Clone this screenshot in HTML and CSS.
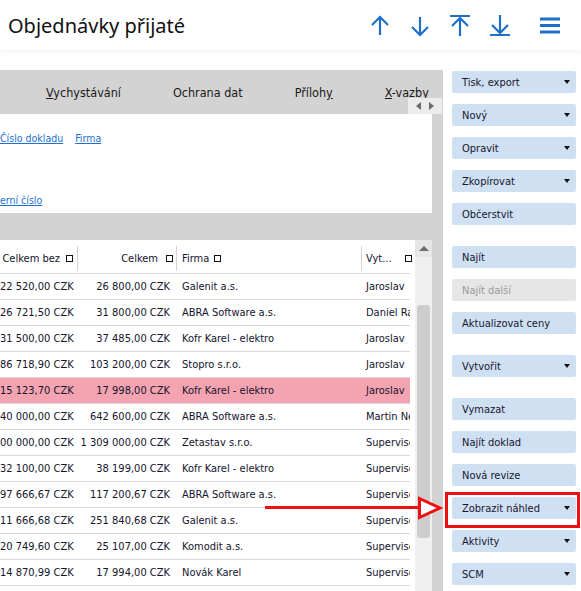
FILE: index.html
```html
<!DOCTYPE html>
<html lang="cs">
<head>
    <meta charset="UTF-8">
    <meta name="viewport" content="width=device-width, initial-scale=1.0">
    <title>Objednávky přijaté</title>
    <link rel="stylesheet" href="styles.css">
</head>
<body>
    <div class="app">
        <header class="topbar">
            <h1 class="title">Objednávky přijaté</h1>
            <nav class="nav-icons">
                <svg class="nav-icon" width="24" height="24" viewBox="0 0 24 24"><path d="M12 4v18M4 12l8-8 8 8"/></svg>
                <svg class="nav-icon" width="24" height="24" viewBox="0 0 24 24"><path d="M12 4v18M4 14l8 8 8-8"/></svg>
                <svg class="nav-icon" width="24" height="24" viewBox="0 0 24 24"><path d="M2 3h20M12 5v18M4 13l8-8 8 8"/></svg>
                <svg class="nav-icon" width="24" height="24" viewBox="0 0 24 24"><path d="M2 22h20M12 2v18M4 12l8 8 8-8"/></svg>
                <svg class="nav-icon menu" width="24" height="24" viewBox="0 0 24 24"><path d="M2 6h20M2 12.5h20M2 19h20"/></svg>
            </nav>
        </header>

        <div class="main">
            <section class="doc-pane">
                <div class="tabs">
                    <span class="tab"><u>V</u>ychystávání</span>
                    <span class="tab">Ochrana dat</span>
                    <span class="tab">Příloh<u>y</u></span>
                    <span class="tab"><u>X</u>-vazby</span>
                    <div class="tab-scroll"><span class="tri-left"></span><span class="tri-right"></span></div>
                </div>

                <div class="pane-body">
                    <div class="filter-panel">
                        <div class="link-row">
                            <a href="#">Číslo dokladu</a>
                            <a href="#">Firma</a>
                        </div>
                        <div class="link-row">
                            <a href="#">erní číslo</a>
                        </div>
                    </div>

                    <div class="grid-wrap">
                        <div class="grid">
                            <div class="grid-head">
                                <div class="hcell right">Celkem bez <span class="chk"></span></div>
                                <div class="hcell right wide-gap">Celkem <span class="chk"></span></div>
                                <div class="hcell left">Firma <span class="chk"></span></div>
                                <div class="hcell split">Vyt... <span class="chk"></span></div>
                            </div>
                            <div class="row"><span class="num">22 520,00 CZK</span><span class="num total">26 800,00 CZK</span><span class="txt">Galenit a.s.</span><span class="who">Jaroslav</span></div>
                            <div class="row"><span class="num">26 721,50 CZK</span><span class="num total">31 800,00 CZK</span><span class="txt">ABRA Software a.s.</span><span class="who">Daniel Ra</span></div>
                            <div class="row"><span class="num">31 500,00 CZK</span><span class="num total">37 485,00 CZK</span><span class="txt">Kofr Karel - elektro</span><span class="who">Jaroslav</span></div>
                            <div class="row"><span class="num">86 718,90 CZK</span><span class="num total">103 200,00 CZK</span><span class="txt">Stopro s.r.o.</span><span class="who">Jaroslav</span></div>
                            <div class="row marked"><span class="num">15 123,70 CZK</span><span class="num total">17 998,00 CZK</span><span class="txt">Kofr Karel - elektro</span><span class="who">Jaroslav</span></div>
                            <div class="row"><span class="num">40 000,00 CZK</span><span class="num total">642 600,00 CZK</span><span class="txt">ABRA Software a.s.</span><span class="who">Martin Ne</span></div>
                            <div class="row"><span class="num">00 000,00 CZK</span><span class="num total">1 309 000,00 CZK</span><span class="txt">Zetastav s.r.o.</span><span class="who">Supervisor</span></div>
                            <div class="row"><span class="num">32 100,00 CZK</span><span class="num total">38 199,00 CZK</span><span class="txt">Kofr Karel - elektro</span><span class="who">Supervisor</span></div>
                            <div class="row"><span class="num">97 666,67 CZK</span><span class="num total">117 200,67 CZK</span><span class="txt">ABRA Software a.s.</span><span class="who">Supervisor</span></div>
                            <div class="row"><span class="num">11 666,68 CZK</span><span class="num total">251 840,68 CZK</span><span class="txt">Galenit a.s.</span><span class="who">Supervisor</span></div>
                            <div class="row"><span class="num">20 749,60 CZK</span><span class="num total">25 107,00 CZK</span><span class="txt">Komodit a.s.</span><span class="who">Supervisor</span></div>
                            <div class="row"><span class="num">14 870,99 CZK</span><span class="num total">17 994,00 CZK</span><span class="txt">Novák Karel</span><span class="who">Supervisor</span></div>
                        </div>
                        <div class="vscroll">
                            <div class="vscroll-up"><span class="tri-up"></span></div>
                            <div class="vscroll-thumb"></div>
                        </div>
                    </div>
                </div>
            </section>

            <aside class="actions">
                <button class="btn drop">Tisk, export</button>
                <button class="btn drop">Nový</button>
                <button class="btn drop">Opravit</button>
                <button class="btn drop">Zkopírovat</button>
                <button class="btn">Občerstvit</button>
                <button class="btn group">Najít</button>
                <button class="btn disabled">Najít další</button>
                <button class="btn">Aktualizovat ceny</button>
                <button class="btn drop group">Vytvořit</button>
                <button class="btn group">Vymazat</button>
                <button class="btn">Najít doklad</button>
                <button class="btn">Nová revize</button>
                <button class="btn drop">Zobrazit náhled</button>
                <button class="btn drop">Aktivity</button>
                <button class="btn drop">SCM</button>
            </aside>
        </div>

        <!-- zvýraznění tlačítka náhledu -->
        <svg class="callout" width="581" height="591" viewBox="0 0 581 591">
            <line x1="265" y1="507.5" x2="419" y2="507.5"/>
            <polygon points="419.5,498.5 419.5,517.5 440,508"/>
            <rect x="446.5" y="493.5" width="132" height="33"/>
        </svg>
    </div>
</body>
</html>
```

FILE: styles.css
```css
body {
    margin: 0;
    padding: 0;
    background: #ffffff;
    font-family: "DejaVu Sans Condensed", "DejaVu Sans", sans-serif;
    font-size: 11px;
    color: #14142e;
}

.app {
    position: relative;
    width: 581px;
    height: 591px;
    overflow: hidden;
}

.topbar {
    height: 50px;
    display: flex;
    align-items: center;
    justify-content: space-between;
    background: #fff;
    box-shadow: 0 3px 5px rgba(0, 0, 0, 0.04);
    position: relative;
    z-index: 1;
}

.title {
    margin: 0 0 0 8px;
    font-family: "Noto Sans", sans-serif;
    font-size: 20px;
    font-weight: normal;
    color: #111;
}

.nav-icons {
    display: flex;
    align-items: center;
    gap: 16px;
    margin-right: 19px;
}

.nav-icon {
    fill: none;
    stroke: #1e6fc8;
    stroke-width: 2.2;
}

.nav-icon.menu {
    margin-left: 10px;
    stroke-width: 3;
}

.main {
    display: flex;
    height: 541px;
}

/* levá část s dokladem */
.doc-pane {
    width: 443px;
    margin-top: 20px;
    background: #d3d3d3;
    display: flex;
    flex-direction: column;
}

.tabs {
    position: relative;
    height: 44px;
    display: flex;
    align-items: center;
    gap: 52px;
    padding-left: 46px;
    font-size: 12.5px;
    color: #1a1a1a;
    flex-shrink: 0;
}

.tab {
    white-space: nowrap;
    padding-top: 1px;
}

.tab-scroll {
    position: absolute;
    right: 1px;
    bottom: 0;
    width: 34px;
    height: 16px;
    background: #ececec;
    display: flex;
    align-items: center;
    justify-content: center;
    gap: 8px;
}

.tri-left,
.tri-right {
    width: 0;
    height: 0;
    border-top: 4px solid transparent;
    border-bottom: 4px solid transparent;
}

.tri-left {
    border-right: 5px solid #6a6a6a;
}

.tri-right {
    border-left: 5px solid #6a6a6a;
}

.pane-body {
    width: 432px;
    flex: 1;
    display: flex;
    flex-direction: column;
    gap: 27px;
    min-height: 0;
}

.filter-panel {
    height: 99px;
    background: #fff;
    display: flex;
    flex-direction: column;
    gap: 48px;
    padding-top: 17px;
    box-sizing: border-box;
}

.link-row {
    display: flex;
    gap: 12px;
    font-size: 10.5px;
    line-height: 14px;
}

.link-row a {
    color: #1f6fd0;
}

.grid-wrap {
    flex: 1;
    display: flex;
    background: #fff;
    min-height: 0;
    overflow: hidden;
}

.grid {
    width: 415px;
}

.grid-head,
.row {
    display: grid;
    grid-template-columns: 78px 99px 185px 50px;
    width: 410px;
    border-bottom: 1px solid #d8d8d8;
}

.grid-head {
    height: 34px;
    align-items: center;
    padding-top: 3px;
    box-sizing: border-box;
}

.hcell {
    display: flex;
    align-items: center;
    height: 25px;
    white-space: nowrap;
    border-right: 1px solid #d4d4d4;
    box-sizing: border-box;
}

.hcell.right {
    justify-content: flex-end;
    gap: 6px;
    padding-right: 4px;
}

.hcell.wide-gap {
    gap: 8px;
    padding-right: 3px;
}

.hcell.left {
    gap: 5px;
    padding-left: 5px;
}

.hcell.split {
    justify-content: space-between;
    padding-left: 4px;
    border-right: none;
    width: 50px;
}

.chk {
    display: inline-block;
    width: 5px;
    height: 5px;
    border: 1px solid #111;
}

.row {
    height: 26px;
    box-sizing: border-box;
    align-items: center;
    white-space: nowrap;
}

.row.marked {
    background: #f4a4b1;
}

.num {
    text-align: right;
    padding-right: 6px;
}

.num.total {
    padding-right: 7px;
}

.txt {
    padding-left: 5px;
}

.who {
    padding-left: 4px;
    overflow: hidden;
    width: 48px;
    box-sizing: border-box;
}

.vscroll {
    width: 17px;
    background: #f0f0f0;
    display: flex;
    flex-direction: column;
    align-items: center;
}

.vscroll-up {
    width: 17px;
    height: 17px;
    background: #e6e6e6;
    display: flex;
    align-items: center;
    justify-content: center;
}

.tri-up {
    width: 0;
    height: 0;
    border-left: 5px solid transparent;
    border-right: 5px solid transparent;
    border-bottom: 5px solid #6a6a6a;
}

.vscroll-thumb {
    width: 13px;
    height: 233px;
    margin-top: 48px;
    background: #cdcdcd;
    border-radius: 3px;
}

/* pravý panel s akcemi */
.actions {
    width: 138px;
    padding: 21px 0 0 9px;
    box-sizing: border-box;
    display: flex;
    flex-direction: column;
    gap: 11px;
}

.btn {
    position: relative;
    width: 124px;
    height: 22px;
    flex-shrink: 0;
    border: none;
    border-radius: 2px;
    background: #cfe0f3;
    padding: 0 0 0 10px;
    text-align: left;
    font-family: inherit;
    font-size: 11px;
    color: #161630;
}

.btn.group {
    margin-top: 10px;
}

.btn.disabled {
    background: #e6e6e6;
    color: #9a9a9a;
}

.btn.drop::after {
    content: "";
    position: absolute;
    right: 6px;
    top: 9px;
    border-left: 3px solid transparent;
    border-right: 3px solid transparent;
    border-top: 4px solid #111;
}

.callout {
    position: absolute;
    top: 0;
    left: 0;
    pointer-events: none;
    fill: none;
    stroke: #ee1010;
    stroke-width: 3;
}

.callout polygon {
    fill: #fff;
}
```
